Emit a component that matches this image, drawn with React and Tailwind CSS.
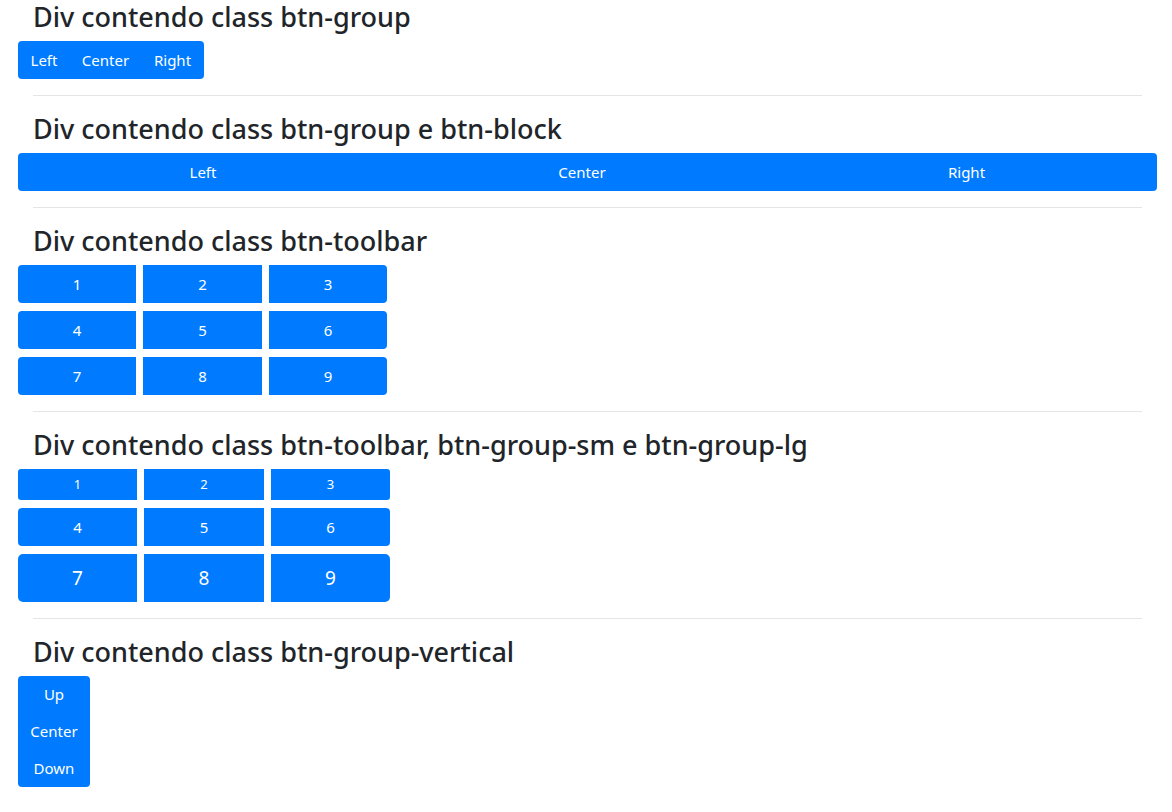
const font = { fontFamily: '"Noto Sans", "Open Sans", sans-serif' };

function Title({ children }) {
    return (
        <h3 className="mx-[15px] mb-2 text-[27px] leading-[33px] font-medium text-[#212529]">
            {children}
        </h3>
    );
}

function Rule() {
    return <hr className="mx-[15px] my-4 border-0 border-t border-[#e5e5e5]" />;
}

const btn = 'flex items-center justify-center bg-[#007bff] text-white';

function Toolbar({ rows, cols, sizes }) {
    // rows: arrays of labels, sizes: per-row classes
    return (
        <div className="flex flex-col gap-2">
            {rows.map((r, i) => (
                <div key={i} className={`grid ${cols} ${sizes[i].gap}`}>
                    {r.map((n, j) => (
                        <div
                            key={n}
                            className={`${btn} ${sizes[i].cls} ${
                                j === 0 ? sizes[i].left : j === r.length - 1 ? sizes[i].right : ''
                            }`}
                        >
                            {n}
                        </div>
                    ))}
                </div>
            ))}
        </div>
    );
}

export default function App() {
    const md = { cls: 'h-[38px] text-[15px]', gap: 'gap-x-[7px]', left: 'rounded-l-[4px]', right: 'rounded-r-[4px]' };
    const sm = { cls: 'h-[31px] text-[13px]', gap: 'gap-x-[7px]', left: 'rounded-l-[3px]', right: 'rounded-r-[3px]' };
    const lg = { cls: 'h-[48px] text-[19px]', gap: 'gap-x-[7px]', left: 'rounded-l-[5px]', right: 'rounded-r-[5px]' };

    return (
        <div className="min-h-screen bg-white pl-[18px] pr-[15px] text-[#212529]" style={font}>
            <Title>Div contendo class btn-group</Title>
            <div className="flex w-[186px] h-[38px] rounded-[4px] bg-[#007bff] text-white text-[15px]">
                <div className="flex w-[52px] items-center justify-center">Left</div>
                <div className="flex w-[71px] items-center justify-center">Center</div>
                <div className="flex w-[63px] items-center justify-center">Right</div>
            </div>
            <Rule />

            <Title>Div contendo class btn-group e btn-block</Title>
            <div className="grid grid-cols-[370px_388px_1fr] h-[38px] rounded-[4px] bg-[#007bff] text-white text-[15px]">
                <div className="flex items-center justify-center">Left</div>
                <div className="flex items-center justify-center">Center</div>
                <div className="flex items-center justify-center">Right</div>
            </div>
            <Rule />

            <Title>Div contendo class btn-toolbar</Title>
            <Toolbar
                rows={[['1', '2', '3'], ['4', '5', '6'], ['7', '8', '9']]}
                cols="grid-cols-[118px_119px_118px] w-[369px]"
                sizes={[md, md, md]}
            />
            <Rule />

            <Title>Div contendo class btn-toolbar, btn-group-sm e btn-group-lg</Title>
            <Toolbar
                rows={[['1', '2', '3'], ['4', '5', '6'], ['7', '8', '9']]}
                cols="grid-cols-[119px_120px_119px] w-[372px]"
                sizes={[sm, md, lg]}
            />
            <Rule />

            <Title>Div contendo class btn-group-vertical</Title>
            <div className="flex w-[72px] flex-col rounded-[4px] bg-[#007bff] text-white text-[15px]">
                <div className="flex h-[37px] items-center justify-center">Up</div>
                <div className="flex h-[37px] items-center justify-center">Center</div>
                <div className="flex h-[37px] items-center justify-center">Down</div>
            </div>
        </div>
    );
}
